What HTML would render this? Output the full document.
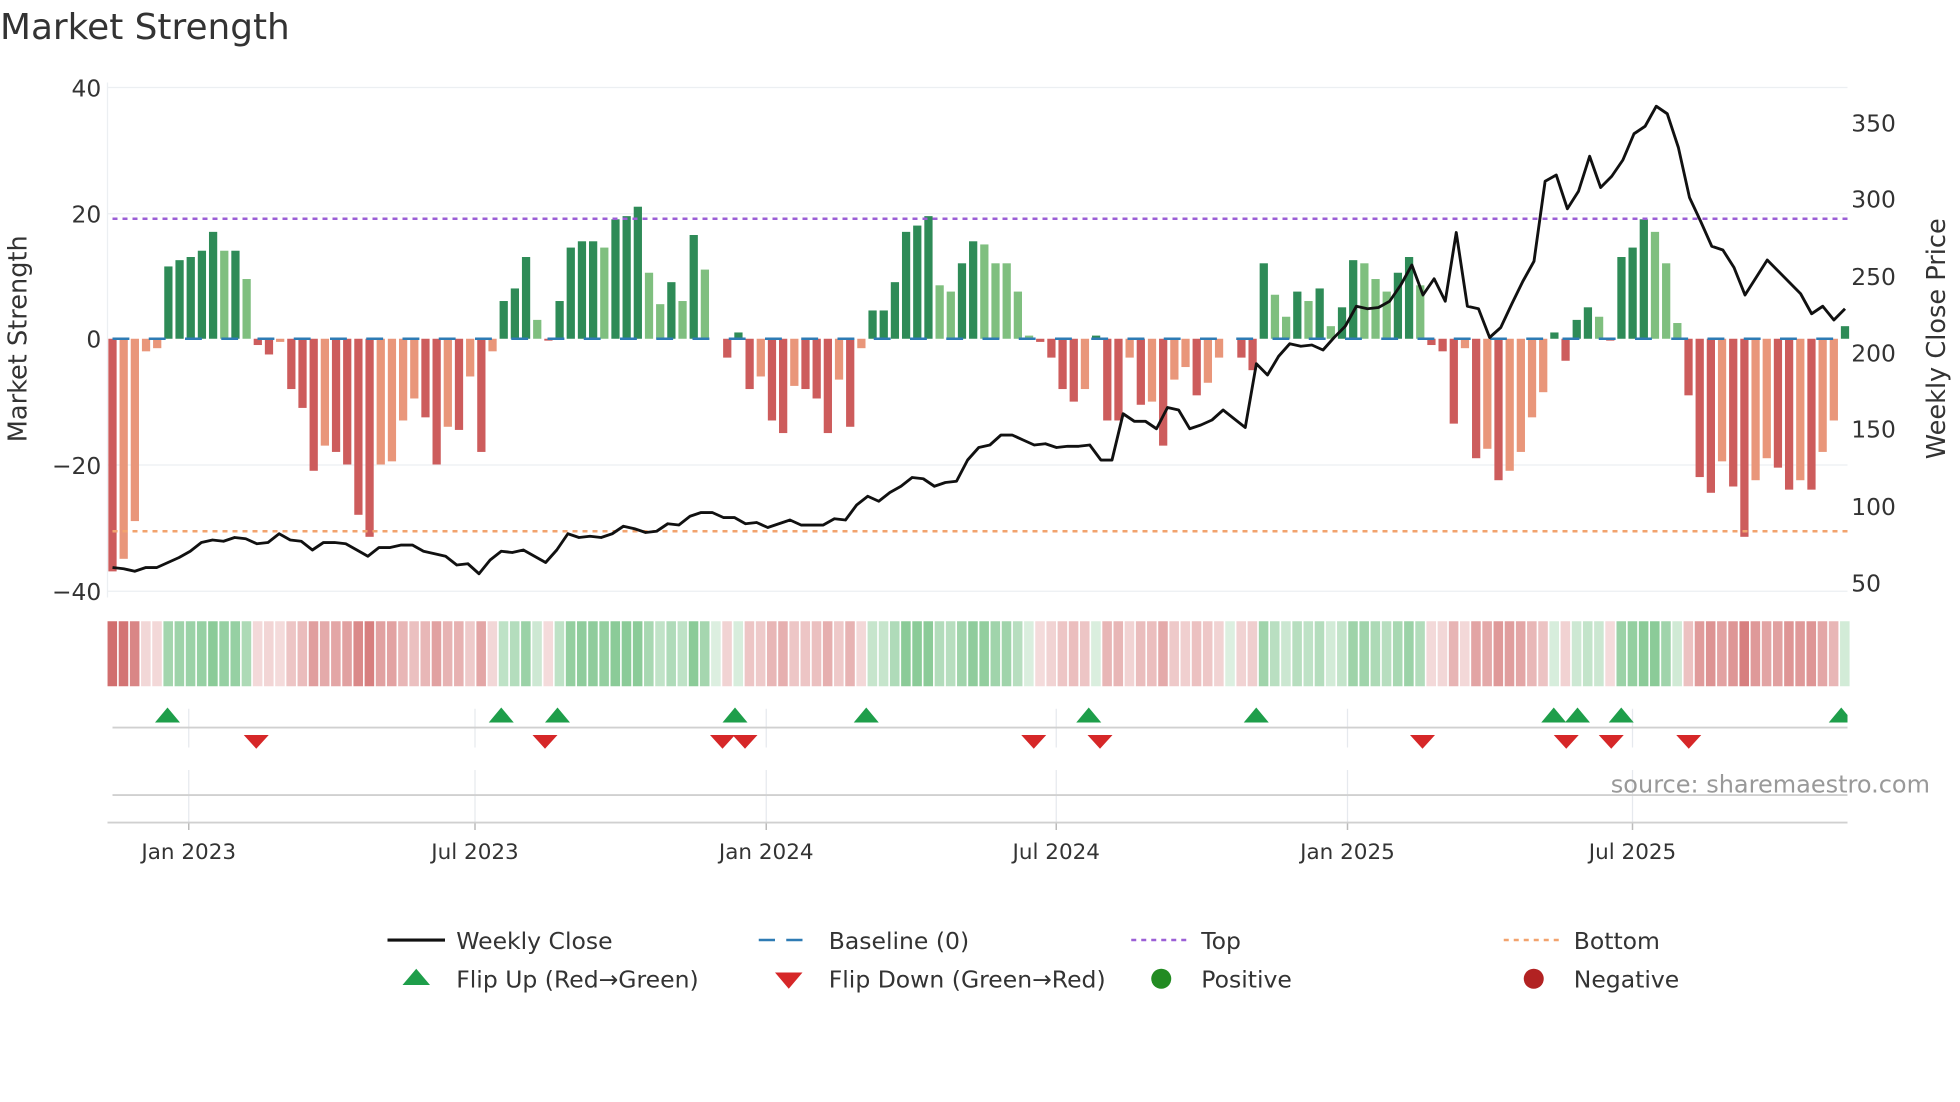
<!DOCTYPE html>
<html><head><meta charset="utf-8"><style>
html,body{margin:0;padding:0;background:#fff;width:1960px;height:1102px;overflow:hidden}
svg{display:block}
text{font-family:"DejaVu Sans","Liberation Sans",sans-serif;fill:#333}
</style></head><body>
<svg id="s" width="1960" height="1102" viewBox="0 0 1568 881.6" xmlns="http://www.w3.org/2000/svg">
<defs><clipPath id="cp"><rect x="86" y="400" width="1392" height="300"/></clipPath></defs>
<text x="0" y="31" font-size="28.7">Market Strength</text>
<g id="grid"></g>
<g id="bars"></g>
<g id="heat"></g>
<g id="marks" clip-path="url(#cp)"></g>
<g font-size="18.7">
<text x="81" y="77" text-anchor="end">40</text>
<text x="81" y="178" text-anchor="end">20</text>
<text x="81" y="278" text-anchor="end">0</text>
<text x="81" y="379" text-anchor="end">−20</text>
<text x="81" y="480" text-anchor="end">−40</text>
<text x="1481" y="105">350</text>
<text x="1481" y="166">300</text>
<text x="1481" y="228">250</text>
<text x="1481" y="289">200</text>
<text x="1481" y="350">150</text>
<text x="1481" y="412">100</text>
<text x="1481" y="473">50</text>
<text transform="translate(21,271) rotate(-90)" text-anchor="middle" font-size="20.5">Market Strength</text>
<text transform="translate(1556,271) rotate(-90)" text-anchor="middle" font-size="20.5">Weekly Close Price</text>
<text x="151" y="687" text-anchor="middle" font-size="17.2">Jan 2023</text>
<text x="380" y="687" text-anchor="middle" font-size="17.2">Jul 2023</text>
<text x="613" y="687" text-anchor="middle" font-size="17.2">Jan 2024</text>
<text x="845" y="687" text-anchor="middle" font-size="17.2">Jul 2024</text>
<text x="1078" y="687" text-anchor="middle" font-size="17.2">Jan 2025</text>
<text x="1306" y="687" text-anchor="middle" font-size="17.2">Jul 2025</text>
<text x="1544" y="634" text-anchor="end" font-size="19.2" style="fill:#999">source: sharemaestro.com</text>
</g>
<g font-size="18.8">
<line x1="310" y1="752" x2="356" y2="752" stroke="#111" stroke-width="2.5"/>
<text x="365" y="759">Weekly Close</text>
<line x1="607" y1="752" x2="651" y2="752" stroke="#2e7bb4" stroke-width="2" stroke-dasharray="13,9"/>
<text x="663" y="759">Baseline (0)</text>
<line x1="905" y1="752" x2="949" y2="752" stroke="#9b5fd6" stroke-width="2" stroke-dasharray="4,4"/>
<text x="961" y="759">Top</text>
<line x1="1203" y1="752" x2="1247" y2="752" stroke="#f2a36e" stroke-width="2" stroke-dasharray="4,4"/>
<text x="1259" y="759">Bottom</text>
<polygon points="322,788 344,788 333,775" fill="#1e9e4a"/>
<text x="365" y="790">Flip Up (Red→Green)</text>
<polygon points="620,778 642,778 631,791" fill="#d62728"/>
<text x="663" y="790">Flip Down (Green→Red)</text>
<circle cx="929" cy="783" r="8" fill="#228b22"/>
<text x="961" y="790">Positive</text>
<circle cx="1227" cy="783" r="8" fill="#b22222"/>
<text x="1259" y="790">Negative</text>
</g>
</svg>
<script>
var NS="http://www.w3.org/2000/svg";
function el(g,t,a){var e=document.createElementNS(NS,t);for(var k in a)e.setAttribute(k,a[k]);document.getElementById(g).appendChild(e);return e;}
[70,171,372,473].forEach(function(y){el("grid","line",{x1:86,x2:1478,y1:y,y2:y,stroke:"#eceff2","stroke-width":1});});
el("grid","line",{x1:86,x2:86,y1:66,y2:478,stroke:"#eceff2","stroke-width":1});
[151,380,613,845,1078,1306].forEach(function(x){
 el("grid","line",{x1:x,x2:x,y1:567,y2:598,stroke:"#e6e9ee","stroke-width":1});
 el("grid","line",{x1:x,x2:x,y1:616,y2:658,stroke:"#e6e9ee","stroke-width":1});
 el("grid","line",{x1:x,x2:x,y1:658,y2:664,stroke:"#bbb","stroke-width":1.2});
});
el("grid","line",{x1:90,x2:1478,y1:582,y2:582,stroke:"#d0d0d0","stroke-width":1.5});
el("grid","line",{x1:90,x2:1478,y1:636,y2:636,stroke:"#d0d0d0","stroke-width":1.5});
el("grid","line",{x1:86,x2:1478,y1:658,y2:658,stroke:"#d0d0d0","stroke-width":1.5});
var D="D",L="L",R="R",S="S";
var data=[[-37,R],[-35,S],[-29,S],[-2,S],[-1.5,S],[11.5,D],[12.5,D],[13,D],[14,D],[17,D],[14,L],[14,D],[9.5,L],[-1,R],[-2.5,R],[-0.5,S],[-8,R],[-11,R],[-21,R],[-17,S],[-18,R],[-20,R],[-28,R],[-31.5,R],[-20,S],[-19.5,S],[-13,S],[-9.5,S],[-12.5,R],[-20,R],[-14,S],[-14.5,R],[-6,S],[-18,R],[-2,S],[6,D],[8,D],[13,D],[3,L],[-0.3,R],[6,D],[14.5,D],[15.5,D],[15.5,D],[14.5,L],[19,D],[19.5,D],[21,D],[10.5,L],[5.5,L],[9,D],[6,L],[16.5,D],[11,L],[0,L],[-3,R],[1,D],[-8,R],[-6,S],[-13,R],[-15,R],[-7.5,S],[-8,R],[-9.5,R],[-15,R],[-6.5,S],[-14,R],[-1.5,S],[4.5,D],[4.5,D],[9,D],[17,D],[18,D],[19.5,D],[8.5,L],[7.5,L],[12,D],[15.5,D],[15,L],[12,L],[12,L],[7.5,L],[0.5,L],[-0.5,R],[-3,R],[-8,R],[-10,R],[-8,S],[0.5,D],[-13,R],[-13,R],[-3,S],[-10.5,R],[-10,S],[-17,R],[-6.5,S],[-4.5,S],[-9,R],[-7,S],[-3,S],[0,S],[-3,R],[-5,R],[12,D],[7,L],[3.5,L],[7.5,D],[6,L],[8,D],[2,L],[5,D],[12.5,D],[12,L],[9.5,L],[7.5,L],[10.5,D],[13,D],[8.5,L],[-1,R],[-2,R],[-13.5,R],[-1.5,S],[-19,R],[-17.5,S],[-22.5,R],[-21,S],[-18,S],[-12.5,S],[-8.5,S],[1,D],[-3.5,R],[3,D],[5,D],[3.5,L],[-0.3,R],[13,D],[14.5,D],[19,D],[17,L],[12,L],[2.5,L],[-9,R],[-22,R],[-24.5,R],[-19.5,S],[-23.5,R],[-31.5,R],[-22.5,S],[-19,S],[-20.5,R],[-24,R],[-22.5,S],[-24,R],[-18,S],[-13,S],[2,D]];
var col={D:"#2e8b57",L:"#7fbf7f",R:"#cd5c5c",S:"#e9967a"};
var n=data.length, x0=90, dx=(1476-90)/(n-1), bw=6.6, y0=271, k=5.03;
data.forEach(function(d,i){
 var x=x0+i*dx-bw/2, v=d[0], h=Math.abs(v)*k;
 if(h>0.3) el("bars","rect",{x:x,y:v>0?y0-h:y0,width:bw,height:h,fill:col[d[1]]});
 var a=Math.min(1,0.22+0.7*Math.abs(v)/37);
 var fill=v>=0?"rgba(100,185,118,"+Math.min(1,0.3+0.9*Math.abs(v)/21)*0.75+")":"rgba(200,80,80,"+a*0.9+")";
 el("heat","rect",{x:x0+i*dx-dx/2+0.5,y:497,width:dx-1.3,height:52,fill:fill});
});
el("bars","line",{x1:90,x2:1478,y1:175,y2:175,stroke:"#9b5fd6","stroke-width":2,"stroke-dasharray":"4,4"});
el("bars","line",{x1:90,x2:1478,y1:425,y2:425,stroke:"#f2a36e","stroke-width":2,"stroke-dasharray":"4,4"});
el("bars","line",{x1:90,x2:1478,y1:271,y2:271,stroke:"#2e7bb4","stroke-width":2,"stroke-dasharray":"13.5,15.5"});
var py=[454,455,457,454,454,450,446,441,434,432,433,430,431,435,434,427,432,433,440,434,434,435,440,445,438,438,436,436,441,443,445,452,451,459,448,441,442,440,445,450,440,427,430,429,430,427,421,423,426,425,419,420,413,410,410,414,414,419,418,422,419,416,420,420,420,415,416,404,397,401,394,389,382,383,389,386,385,368,358,356,348,348,352,356,355,358,357,357,356,368,368,331,337,337,343,326,328,343,340,336,328,335,342,291,300,285,275,277,276,280,270,261,245,247,246,241,228,212,236,223,241,186,245,247,270,262,243,225,209,145,140,167,153,125,150,141,128,107,101,85,91,118,158,177,197,200,214,236,222,208,217,226,235,251,245,256,247];
var pts=py.map(function(y,i){return (x0+i*(1476-90)/(py.length-1)).toFixed(1)+","+y;}).join(" ");
el("bars","polyline",{points:pts,fill:"none",stroke:"#111","stroke-width":2.3,"stroke-linejoin":"round"});
[134,401,446,588,693,871,1005,1243,1262,1297,1473].forEach(function(x){
 el("marks","polygon",{points:(x-10)+",578 "+(x+10)+",578 "+x+",566",fill:"#1e9e4a"});});
[205,436,578,596,827,880,1138,1253,1289,1351].forEach(function(x){
 el("marks","polygon",{points:(x-10)+",588 "+(x+10)+",588 "+x+",599",fill:"#d62728"});});
</script>
</body></html>
